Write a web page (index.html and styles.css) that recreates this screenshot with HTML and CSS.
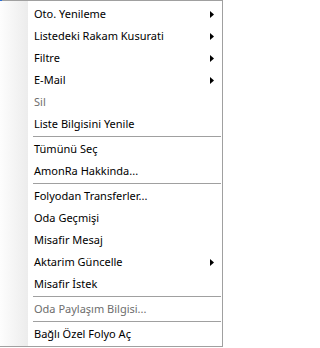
FILE: index.html
```html
<!DOCTYPE html>
<html lang="tr">
<head>
<meta charset="utf-8">
<link rel="stylesheet" href="styles.css">
</head>
<body>
<div class="menu">
  <div class="item sub"><span class="label">Oto. Yenileme</span><svg class="arrow" viewBox="0 0 4 7"><polygon points="0,0 4,3.5 0,7"/></svg></div>
  <div class="item sub"><span class="label">Listedeki Rakam Kusurati</span><svg class="arrow" viewBox="0 0 4 7"><polygon points="0,0 4,3.5 0,7"/></svg></div>
  <div class="item sub"><span class="label">Filtre</span><svg class="arrow" viewBox="0 0 4 7"><polygon points="0,0 4,3.5 0,7"/></svg></div>
  <div class="item sub"><span class="label">E-Mail</span><svg class="arrow" viewBox="0 0 4 7"><polygon points="0,0 4,3.5 0,7"/></svg></div>
  <div class="item disabled"><span class="label">Sil</span></div>
  <div class="item"><span class="label">Liste Bilgisini Yenile</span></div>
  <div class="sep"></div>
  <div class="item"><span class="label">Tümünü Seç</span></div>
  <div class="item"><span class="label">AmonRa Hakkinda...</span></div>
  <div class="sep"></div>
  <div class="item"><span class="label">Folyodan Transferler...</span></div>
  <div class="item"><span class="label">Oda Geçmişi</span></div>
  <div class="item"><span class="label">Misafir Mesaj</span></div>
  <div class="item sub"><span class="label">Aktarim Güncelle</span><svg class="arrow" viewBox="0 0 4 7"><polygon points="0,0 4,3.5 0,7"/></svg></div>
  <div class="item"><span class="label">Misafir İstek</span></div>
  <div class="sep"></div>
  <div class="item disabled"><span class="label">Oda Paylaşım Bilgisi...</span></div>
  <div class="sep"></div>
  <div class="item"><span class="label">Bağlı Özel Folyo Aç</span></div>
</div>
</body>
</html>
```
FILE: styles.css
```css
html, body {
  margin: 0;
  padding: 0;
  background: #ffffff;
}
body {
  width: 225px;
  height: 348px;
  overflow: hidden;
  font-family: "Noto Sans", "Open Sans", sans-serif;
  font-size: 11px;
  color: #000;
}
.menu {
  position: relative;
  width: 223px;
  height: 347px;
  box-sizing: border-box;
  border-top: 1px solid #a0a0a0;
  border-right: 1px solid #a0a0a0;
  border-bottom: 1px solid #a0a0a0;
  padding: 2px 0 1px 0;
  background:
    linear-gradient(to right, #fdfdfd, #ececec) no-repeat 0 0 / 28px 100%,
    #ffffff;
  display: flex;
  flex-direction: column;
}
.menu::before {
  content: "";
  position: absolute;
  left: 0;
  top: -1px;
  width: 2px;
  height: 1px;
  background: #2a6fd6;
}
.item {
  height: 22px;
  flex: none;
  display: flex;
  align-items: center;
  padding-left: 34px;
  padding-right: 8px;
  white-space: nowrap;
  line-height: 22px;
}
.label {
  flex: 1;
}
.item.disabled {
  color: #6d6d6d;
}
.arrow {
  width: 4px;
  height: 7px;
  fill: #000;
}
.sep {
  flex: none;
  height: 3px;
  margin-left: 33px;
  margin-right: 1px;
  position: relative;
}
.sep::after {
  content: "";
  position: absolute;
  left: 0;
  right: 0;
  top: 1px;
  height: 1px;
  background: #a0a0a0;
}
```
